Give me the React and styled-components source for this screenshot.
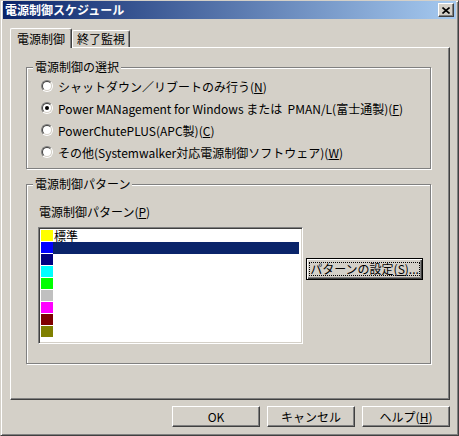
import React from 'react';
import styled, { createGlobalStyle } from 'styled-components';

const face = '#D4D0C8';
const shadow = '#808080';
const dark = '#404040';

const GlobalStyle = createGlobalStyle`
  html, body {
    margin: 0;
    padding: 0;
    background: ${face};
  }
  body {
    font-family: "Noto Sans CJK JP", "Noto Sans", sans-serif;
    font-size: 12px;
    color: #000;
  }
`;

const Window = styled.div`
  box-sizing: border-box;
  width: 459px;
  height: 436px;
  background: ${face};
  border: 1px solid;
  border-color: ${face} ${dark} ${dark} ${face};
  box-shadow: inset 1px 1px #fff, inset -1px -1px ${shadow};
  padding: 0 2px 2px 2px;
  display: flex;
  flex-direction: column;
`;

const TitleBar = styled.div`
  height: 18px;
  display: flex;
  align-items: center;
  justify-content: space-between;
  padding: 0 2px 0 2px;
  background: linear-gradient(to right, #0a246a, #a6caf0);
`;

const TitleText = styled.span`
  color: #fff;
  font-weight: bold;
  line-height: 18px;
`;

const CloseButton = styled.div`
  box-sizing: border-box;
  width: 16px;
  height: 14px;
  background: ${face};
  border: 1px solid;
  border-color: #fff ${dark} ${dark} #fff;
  box-shadow: inset -1px -1px ${shadow};
  display: flex;
  align-items: center;
  justify-content: center;
`;

const Body = styled.div`
  padding: 9px 0 0 7px;
  display: flex;
  flex-direction: column;
`;

const TabStrip = styled.div`
  display: flex;
  align-items: flex-end;
  height: 19px;
`;

const Tab = styled.div`
  box-sizing: border-box;
  position: relative;
  z-index: ${(p) => (p.active ? 1 : 0)};
  height: ${(p) => (p.active ? '20px' : '17px')};
  margin-bottom: ${(p) => (p.active ? '-1px' : '0')};
  padding: 0 ${(p) => (p.active ? '6px' : '4px')};
  background: ${face};
  border-top: 1px solid #fff;
  border-left: 1px solid #fff;
  border-right: 1px solid ${dark};
  border-top-left-radius: 2px;
  border-top-right-radius: 2px;
  box-shadow: inset -1px 0 ${shadow};
  display: flex;
  align-items: center;
  line-height: 14px;
  white-space: nowrap;
`;

const Panel = styled.div`
  box-sizing: border-box;
  width: 440px;
  height: 353px;
  border: 1px solid;
  border-color: #fff ${dark} ${dark} #fff;
  box-shadow: inset -1px -1px ${shadow};
  padding: 19px 0 0 15px;
  display: flex;
  flex-direction: column;
  gap: 15px;
`;

const Group = styled.div`
  box-sizing: border-box;
  width: 405px;
  height: ${(p) => p.h}px;
  border: 1px solid ${shadow};
  box-shadow: inset 1px 1px #fff, 1px 1px #fff;
  display: flex;
  flex-direction: column;
`;

const Legend = styled.div`
  width: fit-content;
  margin: -8px 0 0 6px;
  padding: 0 2px;
  background: ${face};
  line-height: 14px;
  white-space: nowrap;
`;

const RadioList = styled.div`
  display: flex;
  flex-direction: column;
  padding: 1px 0 0 14px;
`;

const RadioRow = styled.div`
  height: 22px;
  display: flex;
  align-items: center;
  gap: 5px;
  white-space: pre;
`;

const RadioOuter = styled.span`
  box-sizing: border-box;
  width: 12px;
  height: 12px;
  border-radius: 50%;
  border: 1px solid;
  border-color: ${shadow} #fff #fff ${shadow};
  flex-shrink: 0;
`;

const RadioInner = styled.span`
  box-sizing: border-box;
  width: 10px;
  height: 10px;
  border-radius: 50%;
  border: 1px solid;
  border-color: ${dark} ${face} ${face} ${dark};
  background: #fff;
  display: flex;
  align-items: center;
  justify-content: center;
`;

const RadioDot = styled.span`
  width: 4px;
  height: 4px;
  border-radius: 50%;
  background: #000;
`;

const Key = styled.u`
  text-decoration: underline;
  text-underline-offset: 1px;
`;

const FieldLabel = styled.div`
  margin: 14px 0 0 12px;
  line-height: 14px;
`;

const PatternRow = styled.div`
  display: flex;
  align-items: flex-start;
  margin: 8px 0 0 11px;
`;

const ListBox = styled.div`
  box-sizing: border-box;
  width: 265px;
  height: 117px;
  background: #fff;
  border: 1px solid;
  border-color: ${shadow} #fff #fff ${shadow};
  box-shadow: inset 1px 1px ${dark}, inset -1px -1px ${face};
  padding: 2px 3px 0 2px;
  display: flex;
  flex-direction: column;
`;

const ListItem = styled.div`
  height: 12px;
  display: flex;
`;

const Swatch = styled.span`
  width: 12px;
  height: 11px;
  background: ${(p) => p.color};
`;

const ItemText = styled.span`
  flex: 1;
  padding-left: 1px;
  height: 12px;
  font-size: 12px;
  line-height: 11px;
  background: ${(p) => (p.selected ? '#0a246a' : 'transparent')};
  color: ${(p) => (p.selected ? '#fff' : '#000')};
  white-space: nowrap;
`;

const Button = styled.div`
  box-sizing: border-box;
  width: ${(p) => p.w}px;
  height: ${(p) => p.h}px;
  background: ${face};
  border: 1px solid;
  border-color: ${(p) => (p.isDefault ? '#000' : `#fff ${dark} ${dark} #fff`)};
  box-shadow: ${(p) =>
    p.isDefault
      ? `inset 1px 1px #fff, inset -1px -1px ${dark}, inset -2px -2px ${shadow}`
      : `inset -1px -1px ${shadow}`};
  display: flex;
  align-items: center;
  justify-content: center;
  white-space: nowrap;
  line-height: 14px;
`;

const SetButton = styled(Button)`
  margin: 31px 0 0 3px;
  padding: 3px;
`;

const FocusRect = styled.span`
  box-sizing: border-box;
  flex: 1;
  align-self: stretch;
  border: 1px dotted #000;
  display: flex;
  align-items: center;
  justify-content: center;
`;

const ButtonRow = styled.div`
  width: 440px;
  margin-top: 6px;
  display: flex;
  justify-content: flex-end;
  gap: 7px;
`;

const swatches = [
  '#ffff00',
  '#0000ff',
  '#000080',
  '#00ffff',
  '#00ff00',
  '#c0c0c0',
  '#ff00ff',
  '#800000',
  '#808000',
];

const Radio = ({ checked, children }) => (
  <RadioRow>
    <RadioOuter>
      <RadioInner>{checked && <RadioDot />}</RadioInner>
    </RadioOuter>
    <span>{children}</span>
  </RadioRow>
);

const App = () => (
  <>
    <GlobalStyle />
    <Window>
      <TitleBar>
        <TitleText>電源制御スケジュール</TitleText>
        <CloseButton>
          <svg width="8" height="7" viewBox="0 0 8 7">
            <path d="M0.5 0.5L7.5 6.5M7.5 0.5L0.5 6.5" stroke="#000" strokeWidth="1.6" />
          </svg>
        </CloseButton>
      </TitleBar>
      <Body>
        <TabStrip>
          <Tab active>電源制御</Tab>
          <Tab>終了監視</Tab>
        </TabStrip>
        <Panel>
          <Group h={102}>
            <Legend>電源制御の選択</Legend>
            <RadioList>
              <Radio>
                シャットダウン／リブートのみ行う(<Key>N</Key>)
              </Radio>
              <Radio checked>
                Power MANagement for Windows または  PMAN/L(富士通製)(<Key>F</Key>)
              </Radio>
              <Radio>
                PowerChutePLUS(APC製)(<Key>C</Key>)
              </Radio>
              <Radio>
                その他(Systemwalker対応電源制御ソフトウェア)(<Key>W</Key>)
              </Radio>
            </RadioList>
          </Group>
          <Group h={180}>
            <Legend>電源制御パターン</Legend>
            <FieldLabel>
              電源制御パターン(<Key>P</Key>)
            </FieldLabel>
            <PatternRow>
              <ListBox>
                {swatches.map((c, i) => (
                  <ListItem key={c}>
                    <Swatch color={c} />
                    <ItemText selected={i === 1}>{i === 0 ? '標準' : ''}</ItemText>
                  </ListItem>
                ))}
              </ListBox>
              <SetButton w={117} h={22} isDefault>
                <FocusRect>
                  パターンの設定(<Key>S</Key>)...
                </FocusRect>
              </SetButton>
            </PatternRow>
          </Group>
        </Panel>
        <ButtonRow>
          <Button w={88} h={21}>OK</Button>
          <Button w={88} h={21}>キャンセル</Button>
          <Button w={88} h={21}>
            ヘルプ(<Key>H</Key>)
          </Button>
        </ButtonRow>
      </Body>
    </Window>
  </>
);

export default App;
